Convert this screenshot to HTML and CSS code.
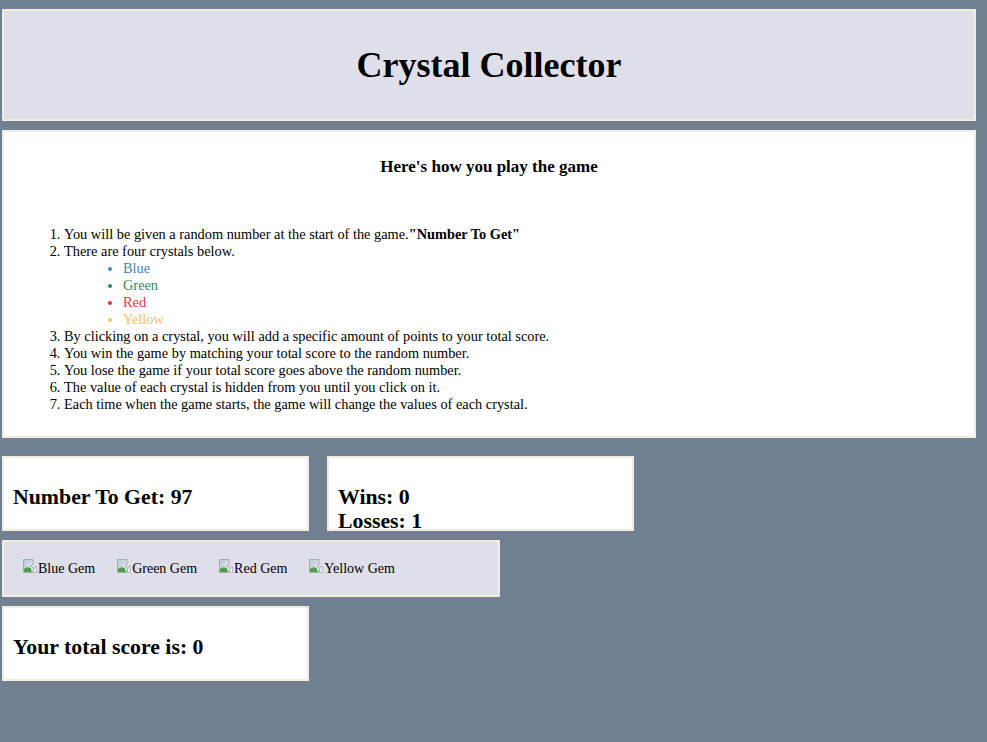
FILE: index.html
```html
<!DOCTYPE html>
<html lang="en">
<head>
<meta charset="utf-8">
<title>Crystal Collector</title>
<link rel="stylesheet" href="styles.css">
</head>
<body>
<div class="page">
  <header class="box title-box">
    <h1 class="title">Crystal Collector</h1>
  </header>

  <section class="box rules">
    <h3 class="rules-heading">Here's how you play the game</h3>
    <ol class="steps">
      <li>You will be given a random number at the start of the game.<strong>"Number To Get"</strong></li>
      <li>There are four crystals below.
        <ul class="crystals">
          <li class="c-blue">Blue</li>
          <li class="c-green">Green</li>
          <li class="c-red">Red</li>
          <li class="c-yellow">Yellow</li>
        </ul>
      </li>
      <li>By clicking on a crystal, you will add a specific amount of points to your total score.</li>
      <li>You win the game by matching your total score to the random number.</li>
      <li>You lose the game if your total score goes above the random number.</li>
      <li>The value of each crystal is hidden from you until you click on it.</li>
      <li>Each time when the game starts, the game will change the values of each crystal.</li>
    </ol>
  </section>

  <div class="stats">
    <div class="box stat">
      <h2 class="stat-text">Number To Get: 97</h2>
    </div>
    <div class="box stat">
      <h2 class="stat-text">Wins: 0<br>Losses: 1</h2>
    </div>
  </div>

  <div class="box gems">
    <span class="gem"><svg class="broken" width="16" height="16" viewBox="0 0 16 16"><defs><linearGradient id="sky" x1="0" y1="0" x2="1" y2="1"><stop offset="0" stop-color="#b9c6d4"/><stop offset="1" stop-color="#eef2f6"/></linearGradient></defs><path d="M1.5 1.5 H11 L11 6 L9 8 L12 11 L10 14.5 H1.5 Z" fill="url(#sky)" stroke="#a3abb3"/><path d="M2 14 V11 Q5 8 9 10.5 L9.8 14 Z" fill="#4a9f45"/><path d="M12.5 8.5 L14.5 8.5 L14.5 14.5 L11 14.5 Z" fill="#f2f4f6" stroke="#a3abb3" stroke-width="0.8"/></svg>Blue Gem</span>
    <span class="gem"><svg class="broken" width="16" height="16" viewBox="0 0 16 16"><path d="M1.5 1.5 H11 L11 6 L9 8 L12 11 L10 14.5 H1.5 Z" fill="url(#sky)" stroke="#a3abb3"/><path d="M2 14 V11 Q5 8 9 10.5 L9.8 14 Z" fill="#4a9f45"/><path d="M12.5 8.5 L14.5 8.5 L14.5 14.5 L11 14.5 Z" fill="#f2f4f6" stroke="#a3abb3" stroke-width="0.8"/></svg>Green Gem</span>
    <span class="gem"><svg class="broken" width="16" height="16" viewBox="0 0 16 16"><path d="M1.5 1.5 H11 L11 6 L9 8 L12 11 L10 14.5 H1.5 Z" fill="url(#sky)" stroke="#a3abb3"/><path d="M2 14 V11 Q5 8 9 10.5 L9.8 14 Z" fill="#4a9f45"/><path d="M12.5 8.5 L14.5 8.5 L14.5 14.5 L11 14.5 Z" fill="#f2f4f6" stroke="#a3abb3" stroke-width="0.8"/></svg>Red Gem</span>
    <span class="gem"><svg class="broken" width="16" height="16" viewBox="0 0 16 16"><path d="M1.5 1.5 H11 L11 6 L9 8 L12 11 L10 14.5 H1.5 Z" fill="url(#sky)" stroke="#a3abb3"/><path d="M2 14 V11 Q5 8 9 10.5 L9.8 14 Z" fill="#4a9f45"/><path d="M12.5 8.5 L14.5 8.5 L14.5 14.5 L11 14.5 Z" fill="#f2f4f6" stroke="#a3abb3" stroke-width="0.8"/></svg>Yellow Gem</span>
  </div>

  <div class="box stat">
    <h2 class="stat-text">Your total score is: 0</h2>
  </div>
</div>
</body>
</html>
```

FILE: styles.css
```css
html, body {
  margin: 0;
  background: #708090;
}

body {
  font-family: "Liberation Serif", "Times New Roman", serif;
  font-size: 14px;
  color: #000;
}

.page {
  width: 974px;
  padding: 9px 0 0 2px;
  display: flex;
  flex-direction: column;
  gap: 9px;
}

.box {
  box-sizing: border-box;
  border: 2px solid #f2ecdf;
}

.title-box {
  height: 112px;
  background: #dfdfea;
  display: flex;
  align-items: center;
  justify-content: center;
}

.title {
  margin: 0;
  font-size: 36px;
  line-height: 41px;
  font-weight: bold;
}

.rules {
  height: 308px;
  background: #fff;
}

.rules-heading {
  margin: 25px 0 0;
  text-align: center;
  font-size: 17px;
  line-height: 20px;
  font-weight: bold;
}

.steps {
  margin: 49px 0 0;
  padding-left: 60px;
  font-size: 14.35px;
  line-height: 17px;
}

.crystals {
  margin: 0;
  padding-left: 59px;
  list-style-type: disc;
}

.c-blue { color: #4682b4; }
.c-green { color: #2e8b57; }
.c-red { color: #dc3545; }
.c-yellow { color: #f4c06b; }

.stats {
  display: flex;
  gap: 18px;
  margin-top: 9px;
}

.stat {
  width: 307px;
  height: 75px;
  background: #fff;
  padding: 27px 0 0 9px;
}

.stat-text {
  margin: 0;
  font-size: 21.8px;
  line-height: 24px;
  font-weight: bold;
}

.gems {
  width: 498px;
  height: 57px;
  background: #dfdfea;
  display: flex;
  align-items: center;
  gap: 21px;
  padding-left: 18px;
}

.gem {
  display: inline-flex;
  align-items: flex-start;
  line-height: 17px;
}

.broken {
  flex: none;
  margin-top: -2px;
}
```
